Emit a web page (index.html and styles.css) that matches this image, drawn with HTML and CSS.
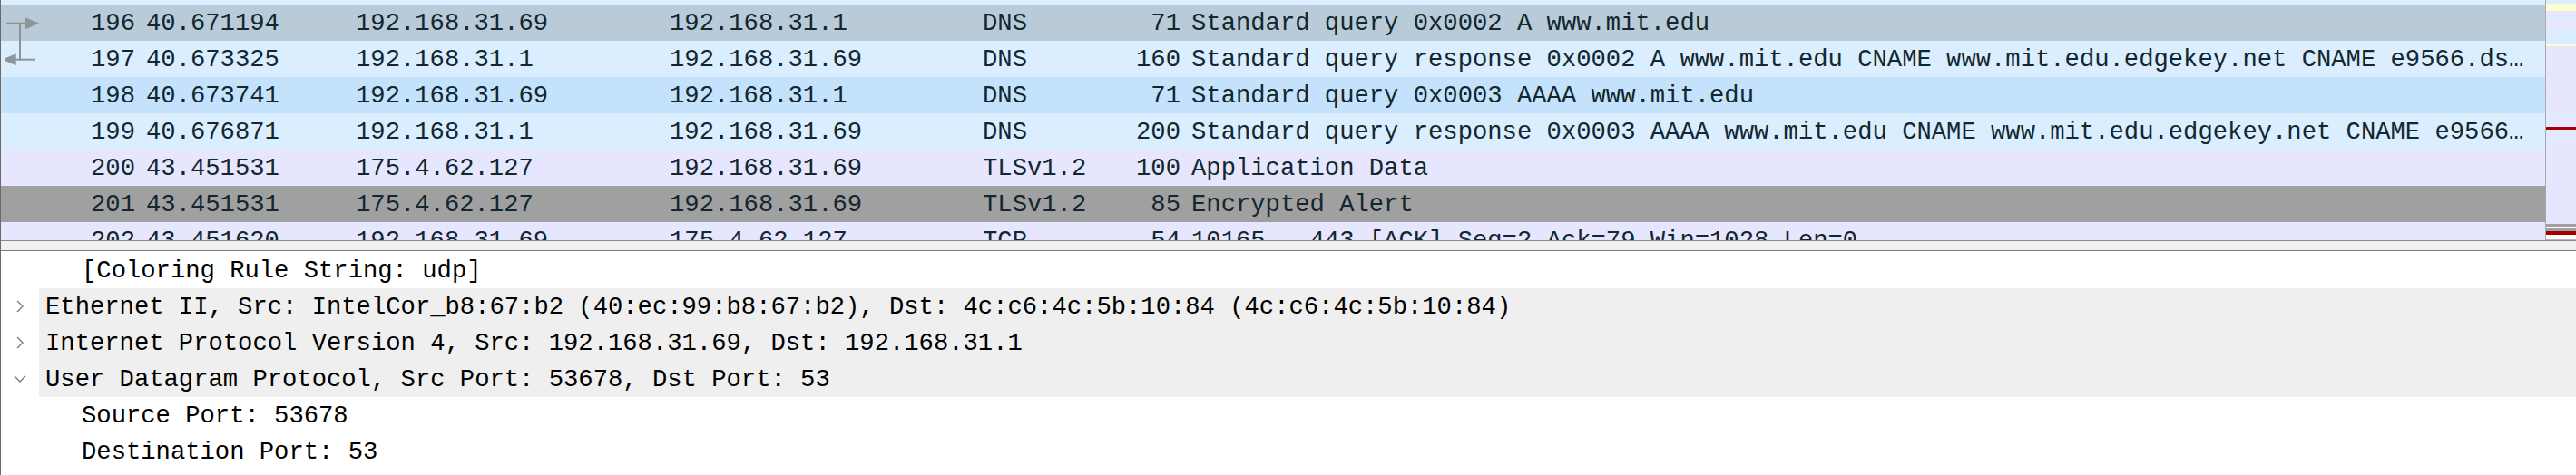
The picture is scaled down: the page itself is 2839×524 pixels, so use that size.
FILE: index.html
```html
<!DOCTYPE html>
<html lang="en">
<head>
<meta charset="utf-8">
<title>Wireshark packet list</title>
<link rel="stylesheet" href="styles.css">
</head>
<body>
<div class="app">
  <div class="packet-pane">
    <div class="packet-list">
      <div class="rows">
        <div class="row udp">
          <div class="cell num"></div><div class="cell"></div><div class="cell"></div><div class="cell"></div><div class="cell"></div><div class="cell len"></div><div class="cell info"></div>
        </div>
        <div class="row selected">
          <div class="cell num">
            <svg class="rel" width="40" height="40" viewBox="0 0 40 40">
              <line x1="2" y1="20.7" x2="27" y2="20.7"/>
              <polygon points="24,15.7 35.7,20.7 24,25.7"/>
              <line x1="17" y1="20" x2="17" y2="40"/>
            </svg>
            <span>196</span>
          </div>
          <div class="cell">40.671194</div><div class="cell">192.168.31.69</div><div class="cell">192.168.31.1</div><div class="cell">DNS</div><div class="cell len">71</div><div class="cell info">Standard query 0x0002 A www.mit.edu</div>
        </div>
        <div class="row udp">
          <div class="cell num">
            <svg class="rel" width="40" height="40" viewBox="0 0 40 40">
              <line x1="17" y1="0" x2="17" y2="21.7"/>
              <line x1="10" y1="20.7" x2="34" y2="20.7"/>
              <polygon points="0,20.7 11.7,15.7 11.7,25.7"/>
            </svg>
            <span>197</span>
          </div>
          <div class="cell">40.673325</div><div class="cell">192.168.31.1</div><div class="cell">192.168.31.69</div><div class="cell">DNS</div><div class="cell len">160</div><div class="cell info">Standard query response 0x0002 A www.mit.edu CNAME www.mit.edu.edgekey.net CNAME e9566.ds…</div>
        </div>
        <div class="row hover">
          <div class="cell num"><span>198</span></div>
          <div class="cell">40.673741</div><div class="cell">192.168.31.69</div><div class="cell">192.168.31.1</div><div class="cell">DNS</div><div class="cell len">71</div><div class="cell info">Standard query 0x0003 AAAA www.mit.edu</div>
        </div>
        <div class="row udp">
          <div class="cell num"><span>199</span></div>
          <div class="cell">40.676871</div><div class="cell">192.168.31.1</div><div class="cell">192.168.31.69</div><div class="cell">DNS</div><div class="cell len">200</div><div class="cell info">Standard query response 0x0003 AAAA www.mit.edu CNAME www.mit.edu.edgekey.net CNAME e9566…</div>
        </div>
        <div class="row tcp">
          <div class="cell num"><span>200</span></div>
          <div class="cell">43.451531</div><div class="cell">175.4.62.127</div><div class="cell">192.168.31.69</div><div class="cell">TLSv1.2</div><div class="cell len">100</div><div class="cell info">Application Data</div>
        </div>
        <div class="row fin">
          <div class="cell num"><span>201</span></div>
          <div class="cell">43.451531</div><div class="cell">175.4.62.127</div><div class="cell">192.168.31.69</div><div class="cell">TLSv1.2</div><div class="cell len">85</div><div class="cell info">Encrypted Alert</div>
        </div>
        <div class="row tcp">
          <div class="cell num"><span>202</span></div>
          <div class="cell">43.451620</div><div class="cell">192.168.31.69</div><div class="cell">175.4.62.127</div><div class="cell">TCP</div><div class="cell len">54</div><div class="cell info">10165 → 443 [ACK] Seq=2 Ack=79 Win=1028 Len=0</div>
        </div>
      </div>
    </div>
    <div class="minimap">
      <div class="stripe s-udp" style="height:4px"></div>
      <div class="stripe s-yel" style="height:8px"></div>
      <div class="stripe s-tcp" style="height:6px"></div>
      <div class="stripe s-udp" style="height:3px"></div>
      <div class="stripe s-tcp" style="height:11px"></div>
      <div class="stripe s-udp" style="height:16px"></div>
      <div class="stripe s-yel" style="height:3px"></div>
      <div class="stripe s-tcp" style="height:49px"></div>
      <div class="stripe s-udp" style="height:2px"></div>
      <div class="stripe s-tcp" style="height:25px"></div>
      <div class="stripe s-udp" style="height:3px"></div>
      <div class="stripe s-tcp" style="height:10px"></div>
      <div class="stripe s-red" style="height:3px"></div>
      <div class="stripe s-tcp" style="height:7px"></div>
      <div class="stripe s-udp" style="height:3px"></div>
      <div class="stripe s-tcp" style="height:94px"></div>
      <div class="stripe s-gray" style="height:3px"></div>
      <div class="stripe s-white" style="height:2px"></div>
      <div class="stripe s-gray" style="height:3px"></div>
      <div class="stripe s-red" style="height:4px"></div>
      <div class="stripe s-white" style="height:4px"></div>
    </div>
  </div>
  <div class="splitter"></div>
  <div class="detail-pane">
    <div class="tree-row child">
      <span class="branch"></span>
      <span class="label">[Coloring Rule String: udp]</span>
    </div>
    <div class="tree-row top">
      <span class="branch">
        <svg width="12" height="14" viewBox="0 0 12 14"><polyline points="3,1 9,7 3,13"/></svg>
      </span>
      <span class="label">Ethernet II, Src: IntelCor_b8:67:b2 (40:ec:99:b8:67:b2), Dst: 4c:c6:4c:5b:10:84 (4c:c6:4c:5b:10:84)</span>
    </div>
    <div class="tree-row top">
      <span class="branch">
        <svg width="12" height="14" viewBox="0 0 12 14"><polyline points="3,1 9,7 3,13"/></svg>
      </span>
      <span class="label">Internet Protocol Version 4, Src: 192.168.31.69, Dst: 192.168.31.1</span>
    </div>
    <div class="tree-row top">
      <span class="branch open">
        <svg width="14" height="10" viewBox="0 0 14 10"><polyline points="1,2 7,8 13,2"/></svg>
      </span>
      <span class="label">User Datagram Protocol, Src Port: 53678, Dst Port: 53</span>
    </div>
    <div class="tree-row child">
      <span class="branch"></span>
      <span class="label">Source Port: 53678</span>
    </div>
    <div class="tree-row child">
      <span class="branch"></span>
      <span class="label">Destination Port: 53</span>
    </div>
  </div>
</div>
</body>
</html>
```

FILE: styles.css
```css
* { box-sizing: border-box; }

html, body {
  margin: 0;
  padding: 0;
  background: #ffffff;
  width: 2839px;
  height: 524px;
  overflow: hidden;
}

.app {
  width: 2839px;
  height: 524px;
  border-left: 1px solid #6f6868;
  font-family: "Liberation Mono", "DejaVu Sans Mono", monospace;
  font-size: 27.2px;
  display: flex;
  flex-direction: column;
}

/* ---------- packet list ---------- */
.packet-pane {
  display: flex;
  height: 266px;
  flex: none;
  border-bottom: 1px solid #8c8c8c;
}

.packet-list {
  flex: 1;
  overflow: hidden;
  background: #ffffff;
}

.rows {
  margin-top: -35px;
  display: flex;
  flex-direction: column;
}

.row {
  display: grid;
  grid-template-columns: 154px 231px 346px 345px 163px 67px 1fr;
  height: 40px;
  flex: none;
  color: #12272e;
}

.row.udp { background: #daeeff; }
.row.tcp { background: #e7e6ff; }
.row.fin { background: #a0a0a0; }
.row.selected { background: #b9cbd8; }
.row.hover { background: #c4e2fb; }

.cell {
  height: 40px;
  line-height: 38px;
  padding: 2px 6px 0 6px;
  white-space: nowrap;
  overflow: hidden;
}

.cell.num {
  display: flex;
  justify-content: flex-end;
  padding-left: 4px;
  position: relative;
}

.cell.len { text-align: right; }
.cell.info { overflow: hidden; }

.rel {
  position: absolute;
  left: 4px;
  top: 0;
  stroke: #8e9598;
  fill: #8e9598;
  stroke-width: 2;
}

/* ---------- minimap ---------- */
.minimap {
  width: 34px;
  flex: none;
  border-left: 1px solid #a9a9a9;
  display: flex;
  flex-direction: column;
  height: 265px;
  border-bottom: 1px solid #b4b4b4;
  margin-bottom: 1px;
  background: #ffffff;
}

.stripe { flex: none; width: 100%; }
.s-udp { background: #daeeff; }
.s-tcp { background: #e7e6ff; }
.s-yel { background: #fcfcd2; }
.s-red { background: #a40000; }
.s-gray { background: #a0a0a0; }
.s-white { background: #ffffff; }

/* ---------- splitter ---------- */
.splitter {
  flex: none;
  height: 11px;
  background: #f0f0f0;
  border-bottom: 1px solid #7f7f7f;
}

/* ---------- packet details ---------- */
.detail-pane {
  flex: 1;
  background: #ffffff;
  color: #000000;
  padding-top: 1px;
  display: flex;
  flex-direction: column;
}

.tree-row {
  display: flex;
  height: 40px;
  flex: none;
  white-space: nowrap;
}

.branch {
  width: 42px;
  flex: none;
  display: flex;
  align-items: center;
  justify-content: center;
  padding-right: 0;
}

.branch svg {
  fill: none;
  stroke: #7b7b7b;
  stroke-width: 1.4;
}

.label {
  flex: 1;
  line-height: 38px;
  padding: 2px 0 0 7px;
}

.tree-row.top .label { background: #efefef; }
.tree-row.child .label { padding-left: 47px; }
```
